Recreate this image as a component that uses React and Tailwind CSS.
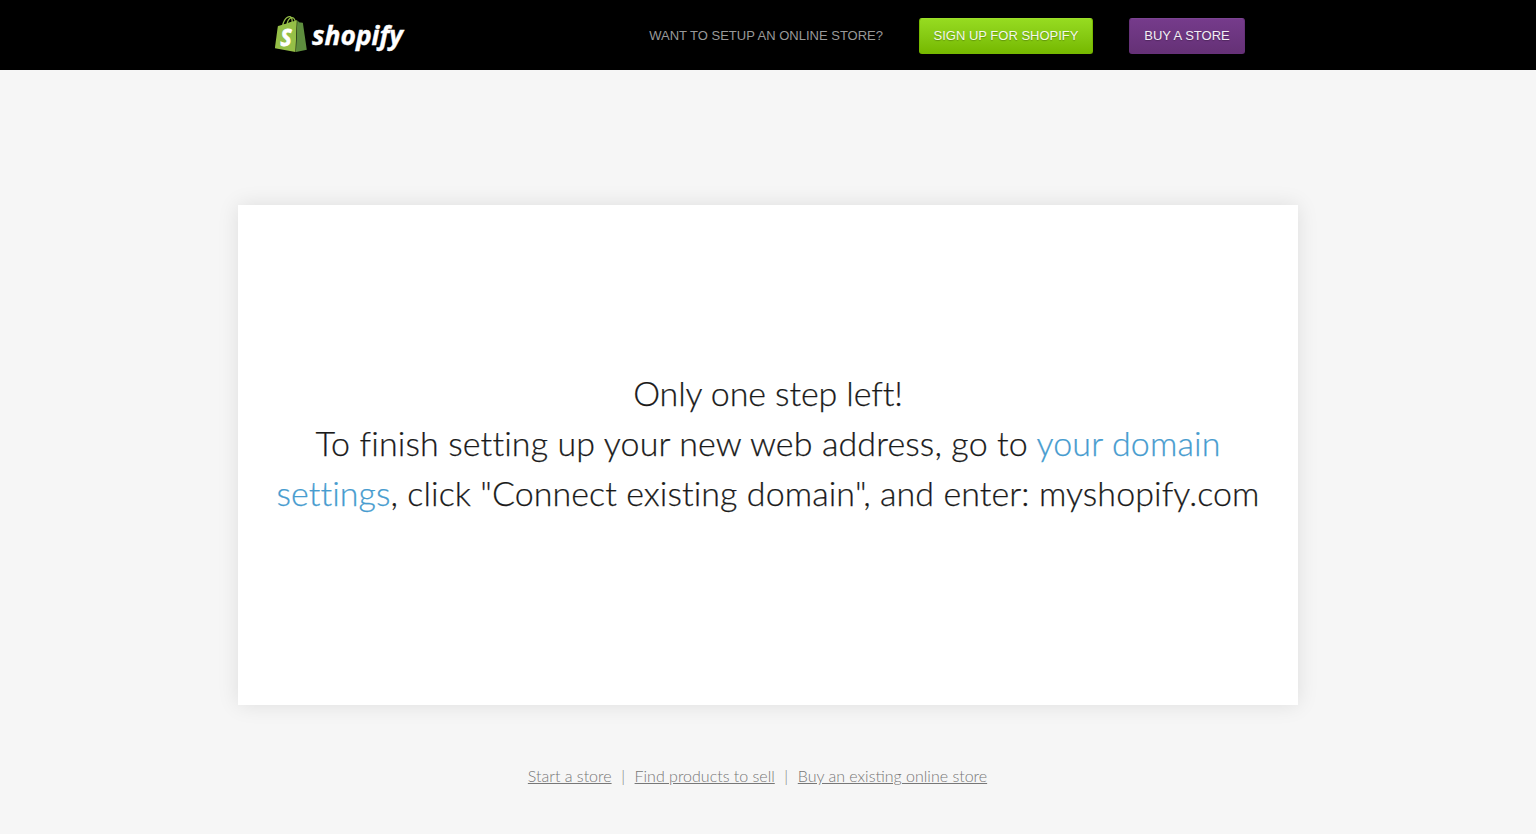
import React from 'react';

const footerLinks = ['Start a store', 'Find products to sell', 'Buy an existing online store'];

const Logo = () => (
  <svg width="136" height="44" viewBox="0 0 136 44" className="block">
    <g transform="translate(-2.2 0) scale(1.51 1.5)">
      <path
        fill="#95bf47"
        fillRule="evenodd"
        d="M11.17.83c.136 0 .271.038.405.135-.984.465-2.064 1.639-2.508 3.992-.656.213-1.293.405-1.889.578C7.697 3.75 8.951.84 11.17.84V.83zm1.235 2.949v.135c-.754.232-1.583.484-2.394.736.466-1.777 1.333-2.645 2.085-2.971.193.501.309 1.176.309 2.1zm.539-2.234c.694.074 1.141.867 1.429 1.755-.349.114-.735.231-1.158.366v-.252c0-.752-.096-1.371-.271-1.871v.002zm2.992 1.289c-.02 0-.06.021-.078.021s-.289.075-.714.21c-.423-1.233-1.176-2.37-2.508-2.37h-.115C12.135.209 11.669 0 11.265 0 8.159 0 6.675 3.877 6.21 5.846c-1.194.365-2.063.636-2.16.674-.675.213-.694.232-.772.87-.075.462-1.83 14.063-1.83 14.063L15.009 24l.927-21.166z"
      />
      <path
        fill="#5e8e3e"
        d="M15.337 23.979l7.216-1.561s-2.604-17.613-2.625-17.73c-.018-.116-.114-.192-.211-.192s-1.929-.136-1.929-.136-1.275-1.274-1.439-1.411c-.045-.037-.075-.057-.121-.074l-.914 21.104h.023z"
      />
    </g>
    <text
      x="5.5"
      y="29.5"
      fill="#fff"
      stroke="#fff"
      strokeWidth="0.9"
      textLength="11"
      lengthAdjust="spacingAndGlyphs"
      className="font-['Open_Sans',sans-serif] text-[24px] font-bold italic"
    >
      S
    </text>
    <text
      x="37"
      y="29"
      fill="#fff"
      stroke="#fff"
      strokeWidth="0.4"
      textLength="91"
      lengthAdjust="spacingAndGlyphs"
      className="font-['Open_Sans',sans-serif] text-[27px] font-bold italic"
    >
      shopify
    </text>
  </svg>
);

const Header = () => (
  <header className="h-[70px] bg-black">
    <div className="mx-auto flex h-full w-[1060px] items-center justify-between pr-[53px] pl-[37px]">
      <a href="#" className="mt-[6px]">
        <Logo />
      </a>
      <div className="flex items-center gap-9 font-['Liberation_Sans',sans-serif] text-[13px] whitespace-nowrap uppercase">
        <span className="mt-0.5 text-[#999]">Want to setup an online store?</span>
        <a
          href="#"
          className="mt-0.5 flex h-9 w-[174px] items-center justify-center rounded-[3px] border border-[#77b800] border-t-[#9bdf2a] bg-linear-to-b from-[#96db20] to-[#76b900] text-[#f4f9ea] [text-shadow:0_1px_1px_rgba(0,0,0,0.25)]"
        >
          Sign up for Shopify
        </a>
        <a
          href="#"
          className="mt-0.5 flex h-9 w-[116px] items-center justify-center rounded-[3px] border border-[#663179] border-t-[#7c4492] bg-linear-to-b from-[#753b8b] to-[#653176] text-[#f3eef5] [text-shadow:0_1px_1px_rgba(0,0,0,0.25)]"
        >
          Buy a Store
        </a>
      </div>
    </div>
  </header>
);

const App = () => {
  return (
    <div className="flex h-screen flex-col overflow-hidden bg-[#f6f6f6] font-['Lato',sans-serif] font-light">
      <Header />

      <main className="mx-auto mt-[135px] flex h-[500px] w-[1060px] shrink-0 items-center justify-center bg-white shadow-[0_0_20px_rgba(0,0,0,0.1)]">
        <h1 className="mt-[-25px] text-center text-[34px] leading-[50px] whitespace-nowrap text-[#1a1a1a] [-webkit-text-stroke:0.25px]">
          <span className="block tracking-[-0.1px]">Only one step left!</span>
          <span className="block tracking-[0.13px]">
            To finish setting up your new web address, go to{' '}
            <a href="#" className="text-[#479ccf]">your domain</a>
          </span>
          <span className="block tracking-[0.07px]">
            <a href="#" className="text-[#479ccf]">settings</a>
            , click "Connect existing domain", and enter: myshopify.com
          </span>
        </h1>
      </main>

      <footer className="mx-auto mt-[59px] flex w-[1060px] justify-center pr-[21px] text-base leading-6 whitespace-nowrap text-[#777]">
        {footerLinks.map((label, index) => (
          <React.Fragment key={label}>
            {index > 0 && <span className="w-[23px] text-center">|</span>}
            <a href="#" className="underline">{label}</a>
          </React.Fragment>
        ))}
      </footer>
    </div>
  );
};

export default App;
